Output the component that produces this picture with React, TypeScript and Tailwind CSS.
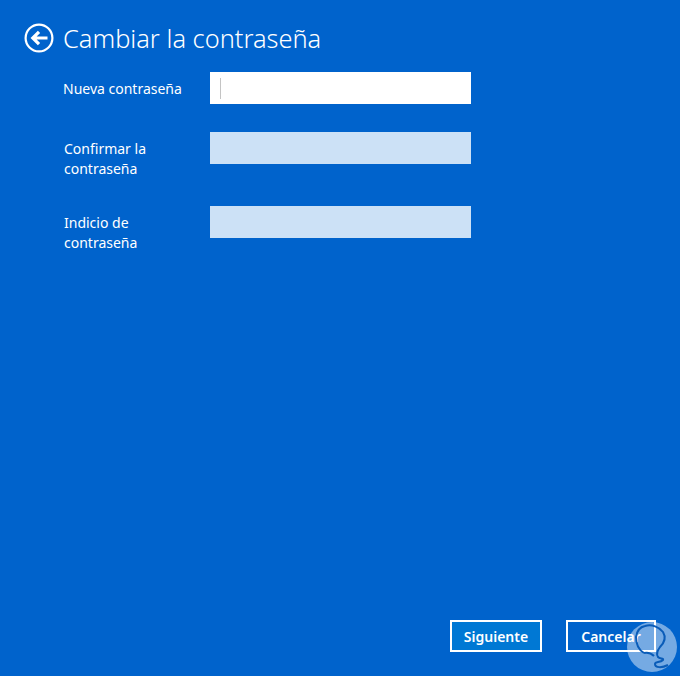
import React from 'react';

const font = "font-['Noto_Sans','Open_Sans',sans-serif]";

const BackIcon = () => (
  <svg width="32" height="32" viewBox="0 0 32 32" fill="none" stroke="white" className="shrink-0">
    <circle cx="16" cy="16" r="13.4" strokeWidth="2.2" />
    <path d="M24.5 16H10M16 9.8L9.8 16L16 22.2" strokeWidth="3.2" />
  </svg>
);

const Watermark = () => (
  <svg width="50" height="50" viewBox="0 0 50 50" className="absolute right-[3px] bottom-[4px]" fill="none">
    <circle cx="25" cy="25" r="25" fill="white" fillOpacity="0.46" />
    <path
      d="M17 31C12 28 9 24 9 15C10 8 13 5 18 4C25 2 32 5 36 10C39 15 38 20 33 25C30 29 29 32 31 35C33 37 37 36 36 38C33 41 28 39 28 42C28 46 35 46 41 43M17 31C21 30 24 31 27 34"
      stroke="#0a5cb8"
      strokeWidth="2"
    />
  </svg>
);

function Field({ label, active }: { label: React.ReactNode; active?: boolean }) {
  return (
    <div className="flex items-start">
      <div className={`w-[147px] pt-[7px] text-[14px] leading-5 text-white ${active ? '' : 'pl-px'}`}>{label}</div>
      {active ? (
        <div className="flex h-8 w-[261px] items-center bg-white pl-[10px]">
          <div className="h-[21px] w-px bg-[#c4c4c4]" />
        </div>
      ) : (
        <div className="h-8 w-[261px] bg-[#cce1f6]" />
      )}
    </div>
  );
}

export default function App() {
  return (
    <div className={`relative flex h-[676px] w-[680px] flex-col overflow-hidden bg-[#0063cc] ${font}`}>
      <div className="flex items-center gap-2 pt-[22px] pl-[23px]">
        <BackIcon />
        <h1 className="text-[25.4px] leading-8 font-light text-white">Cambiar la contraseña</h1>
      </div>
      <div className="flex flex-col gap-7 pt-[18px] pl-[63px]">
        <Field label="Nueva contraseña" active />
        <div className="flex flex-col gap-[27px]">
          <Field label={<>Confirmar la<br />contraseña</>} />
          <Field label={<>Indicio de<br />contraseña</>} />
        </div>
      </div>
      <div className="mt-auto flex justify-end gap-6 pr-6 pb-6">
        <button className="h-8 w-[92px] border-2 border-white bg-[#0078d4] text-[14px] font-semibold text-white">Siguiente</button>
        <button className="h-8 w-[90px] border-2 border-white text-[14px] font-semibold text-white">Cancelar</button>
      </div>
      <Watermark />
    </div>
  );
}
